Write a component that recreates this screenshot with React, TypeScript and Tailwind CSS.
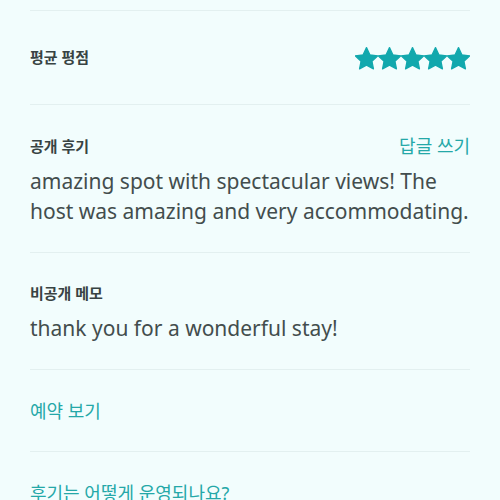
import React from "react";

const Star = () => (
  <svg width="23" height="23" viewBox="1.4 1.2 21.2 21.2" className="block">
    <path
      d="M12 1.8l3.1 6.6 7.2.9-5.3 5 1.4 7.1L12 17.9l-6.4 3.5 1.4-7.1-5.3-5 7.2-.9z"
      fill="#12a8ad"
      stroke="#12a8ad"
      strokeWidth="1.2"
      strokeLinejoin="round"
    />
  </svg>
);

const Divider = () => <div className="h-px bg-[#e3f0f0]" />;

export default function App() {
  return (
    <div
      className="w-[500px] h-[500px] overflow-hidden bg-[#f2fdfd] px-[30px] text-[#3d4747]"
      style={{ fontFamily: '"Noto Sans", "Noto Sans CJK KR", sans-serif' }}
    >
      <div className="h-[10px]" />
      <Divider />
      <div className="h-[93px] flex items-center justify-between">
        <span className="text-[15px] font-semibold text-[#384343]">평균 평점</span>
        <div className="flex items-center gap-0 mt-[1px]">
          <Star />
          <Star />
          <Star />
          <Star />
          <Star />
        </div>
      </div>
      <Divider />
      <div className="pt-[29px] pb-[26px]">
        <div className="flex items-center justify-between h-[24px]">
          <span className="text-[15px] font-semibold text-[#384343]">공개 후기</span>
          <span className="text-[18px] text-[#25a8a8]">답글 쓰기</span>
        </div>
        <p className="mt-[8px] text-[21px] leading-[30px] text-[#434d4d]">
          amazing spot with spectacular views! The host was amazing and very accommodating.
        </p>
      </div>
      <Divider />
      <div className="pt-[28px] pb-[26px]">
        <div className="h-[24px] flex items-center">
          <span className="text-[15px] font-semibold text-[#384343]">비공개 메모</span>
        </div>
        <p className="mt-[8px] text-[21px] leading-[30px] text-[#434d4d]">
          thank you for a wonderful stay!
        </p>
      </div>
      <Divider />
      <div className="h-[81px] flex items-center pt-[1px]">
        <span className="text-[18px] text-[#25a8a8]">예약 보기</span>
      </div>
      <Divider />
      <div className="pt-[28px]">
        <span className="text-[18px] text-[#25a8a8]">후기는 어떻게 운영되나요?</span>
      </div>
    </div>
  );
}
